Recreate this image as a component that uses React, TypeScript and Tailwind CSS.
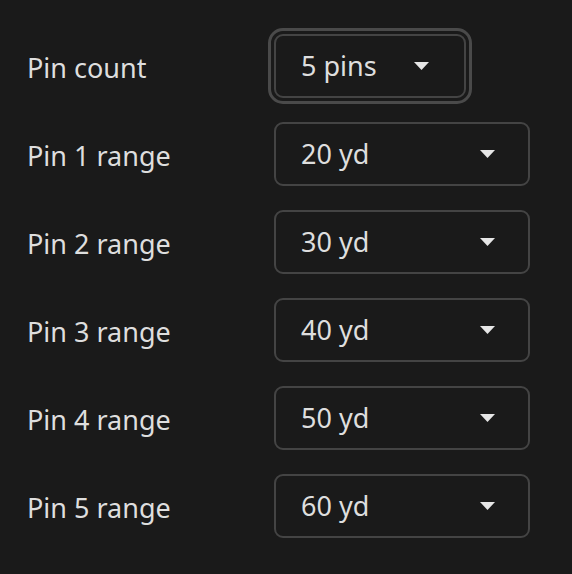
import React from "react";

const Caret = () => (
  <svg width="15" height="8" viewBox="0 0 15 8" className="shrink-0">
    <path d="M0 0 L15 0 L7.5 8 Z" fill="#e6e6e6" />
  </svg>
);

const rows = [
  { label: "Pin 1 range", value: "20 yd" },
  { label: "Pin 2 range", value: "30 yd" },
  { label: "Pin 3 range", value: "40 yd" },
  { label: "Pin 4 range", value: "50 yd" },
  { label: "Pin 5 range", value: "60 yd" },
];

export default function App() {
  return (
    <div
      className="w-[572px] h-[574px] bg-[#1a1a1a] text-[#dedede] pt-[22px]"
      style={{ fontFamily: "'Noto Sans', sans-serif" }}
    >
      <div className="flex items-center h-[88px]">
        <div className="w-[274px] pl-[27px] text-[27px] leading-[36px] pt-[3px]">Pin count</div>
        <div className="w-[192px] h-[64px] flex items-center justify-between pl-[25px] pr-[35px] rounded-[9px] border-2 border-[#444444] outline-[3px] outline-solid outline-[#4a4a4a] outline-offset-[3px]">
          <span className="text-[27px] leading-[36px]">5 pins</span>
          <Caret />
        </div>
      </div>
      {rows.map((r) => (
        <div key={r.label} className="flex items-center h-[88px]">
          <div className="w-[274px] pl-[27px] text-[27px] leading-[36px] pt-[3px]">{r.label}</div>
          <div className="w-[256px] h-[64px] flex items-center justify-between pl-[25px] pr-[33px] rounded-[9px] border-2 border-[#444444]">
            <span className="text-[27px] leading-[36px]">{r.value}</span>
            <Caret />
          </div>
        </div>
      ))}
    </div>
  );
}
